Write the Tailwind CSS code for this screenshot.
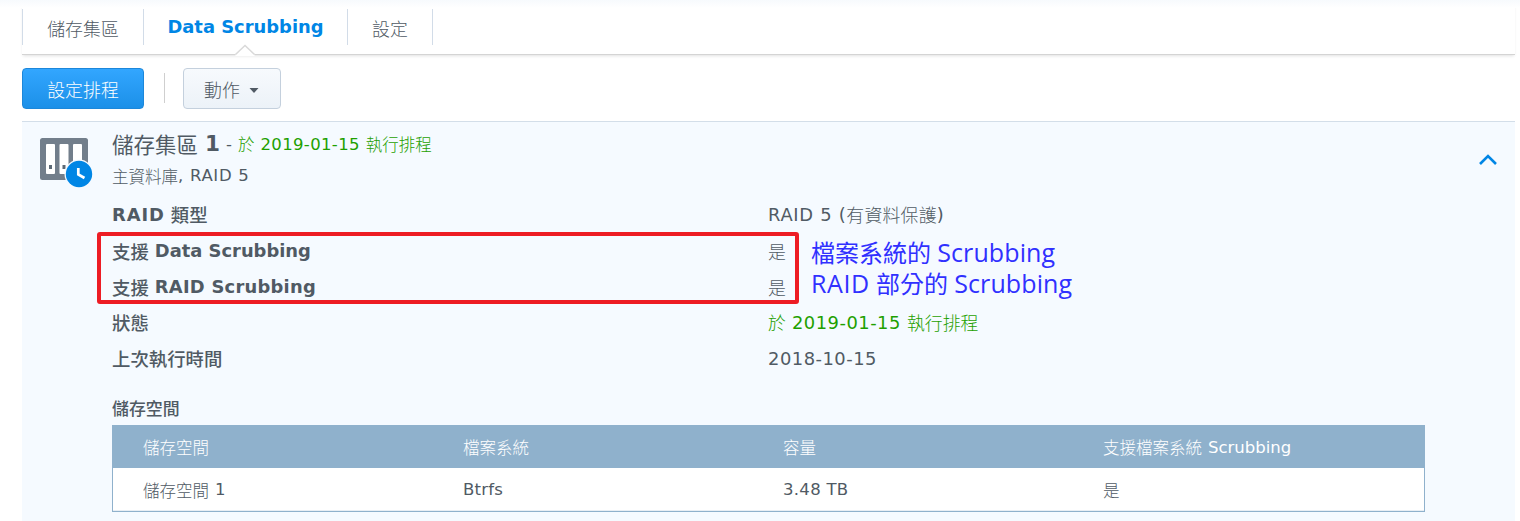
<!DOCTYPE html>
<html lang="zh-Hant">
<head>
<meta charset="utf-8">
<title>Data Scrubbing</title>
<script src="https://cdn.jsdelivr.net/npm/@tailwindcss/browser@4"></script>
</head>
<body class="h-[521px] overflow-hidden bg-white font-['DejaVu_Sans','Noto_Sans_CJK_TC',sans-serif] text-[17.9px] text-[#505a64]">
<div class="flex h-[521px] w-[1515px] flex-col pl-[22px] whitespace-nowrap">

  <!-- Tabs -->
  <nav class="relative h-[55px] shrink-0 border-b border-[#d4d4d4] pt-[9px] shadow-[0_2px_3px_-1px_rgba(0,0,0,0.12)]">
    <div class="flex h-9 border-l border-[#d2dce8] leading-9">
      <a class="flex w-[121px] justify-center border-r border-[#d2dce8] pt-[3px] font-light">儲存集區</a>
      <a class="flex w-[204px] justify-center border-r border-[#d2dce8] font-bold text-[#0086e5]">Data Scrubbing</a>
      <a class="flex w-[85px] justify-center border-r border-[#d2dce8] pt-[3px] font-light">設定</a>
    </div>
    <svg class="absolute top-[44px] left-[212px]" width="22" height="12" viewBox="0 0 22 12"><path d="M1.500 10.500L11 1.500L20.500 10.500V12H1.500Z" fill="#fff"/><path d="M1.500 10.500L11 1.500L20.500 10.500" fill="none" stroke="#d9d9d9" stroke-width="1.500"/></svg>
  </nav>

  <!-- Toolbar -->
  <div class="flex h-[66px] shrink-0 items-start pt-[13px]">
    <button class="flex h-[41px] w-[122px] items-center justify-center rounded border border-[#1c87da] bg-linear-to-b from-[#32a6ff] to-[#1b90e8] font-light text-white"><span class="pt-[5px]">設定排程</span></button>
    <i class="mt-[5px] ml-[20px] h-[30px] w-px bg-[#cfcfcf]"></i>
    <button class="ml-[18px] flex h-[41px] w-[98px] items-center rounded border border-[#c4d0dd] bg-linear-to-b from-[#f7fafd] to-[#ecf2f8] pl-[20px] font-light"><span class="pt-[5px]">動作</span>
      <svg class="mt-[4px] ml-[9px]" width="10" height="5" viewBox="0 0 10 5"><path d="M0.500 0H9.500L5 5Z" fill="#505a64"/></svg>
    </button>
  </div>

  <!-- Storage pool -->
  <main class="relative h-[400px] shrink-0 border-t border-[#d3dee9] bg-[#f5faff]">
    <header class="flex h-[76px] pl-[17px]">
      <svg class="mt-[15px] shrink-0" width="56" height="52" viewBox="0 0 56 52">
        <rect x="1" y="1" width="48" height="42" rx="2.500" fill="#727e8b"/>
        <rect x="7" y="7" width="9" height="30" rx="1" fill="#fff"/>
        <rect x="20.500" y="7" width="9" height="30" rx="1" fill="#fff"/>
        <rect x="34" y="7" width="9" height="30" rx="1" fill="#fff"/>
        <rect x="10" y="28" width="3" height="4" fill="#5d6975"/>
        <rect x="23.500" y="28" width="3" height="4" fill="#5d6975"/>
        <circle cx="40" cy="37" r="14.500" fill="#f5faff"/>
        <circle cx="40" cy="37" r="13.200" fill="#0086e5"/>
        <path d="M39.300 31V37.500L45.500 41" fill="none" stroke="#fff" stroke-width="2.700"/>
      </svg>
      <div class="ml-[17px] flex flex-col pt-[4px]">
        <div class="flex h-[34px] items-start text-[16.5px] leading-[37px]"><span class="pt-px text-[21.5px]">儲存集區</span><b class="ml-[7px] text-[21.5px] leading-[35px]">1</b><span class="ml-[6px]">-</span><span class="ml-[6px] flex gap-[6px] text-[#1ea000]"><span class="pt-px font-light">於</span><span class="tracking-[0.35px]">2019-01-15</span><span class="pt-px font-light">執行排程</span></span></div>
        <div class="flex h-[30px] items-start text-[16.5px] leading-[31px]"><span class="pt-[2px] font-light">主資料庫</span><span class="tracking-[0.7px]">, RAID 5</span></div>
      </div>
      <svg class="mt-[31px] mr-[18px] ml-auto" width="18" height="13" viewBox="0 0 18 13"><path d="M1 11L9 3L17 11" fill="none" stroke="#0086e5" stroke-width="2.600"/></svg>
    </header>

    <dl class="grid auto-rows-[36px] grid-cols-[656px_1fr] pl-[90px] leading-[34px] *:flex *:items-start">
      <dt class="gap-[6px]"><b class="tracking-[0.9px]">RAID</b><span class="pt-px text-[18.4px] font-medium">類型</span></dt><dd class="tracking-[0.7px]"><span>RAID 5 (</span><span class="pt-px font-light tracking-[0.2px]">有資料保護</span><span>)</span></dd>
      <dt class="gap-[6px]"><span class="pt-[2px] text-[18.4px] font-medium">支援</span><b>Data Scrubbing</b></dt><dd class="pt-[2px] font-light">是</dd>
      <dt class="gap-[6px]"><span class="pt-[2px] text-[18.4px] font-medium">支援</span><b class="tracking-[0.25px]">RAID Scrubbing</b></dt><dd class="pt-[2px] font-light">是</dd>
      <dt class="pt-px text-[18.4px] font-medium">狀態</dt><dd class="gap-[6px] text-[#1ea000]"><span class="pt-px font-light">於</span><span class="tracking-[0.5px]">2019-01-15</span><span class="pt-px font-light">執行排程</span></dd>
      <dt class="pt-px text-[18.4px] font-medium">上次執行時間</dt><dd class="tracking-[0.5px]">2018-10-15</dd>
    </dl>

    <section class="pt-[15px] pr-[90px] pl-[90px] text-[16.5px]">
      <h3 class="h-[32px] text-[16.9px] leading-[32px] font-medium">儲存空間</h3>
      <div class="h-[87px] border border-[#8fb1cc] bg-white">
        <div class="grid h-[42px] grid-cols-[320px_320px_320px_1fr] bg-[#8fb1cc] pt-[2px] pl-[30px] leading-[42px] font-light text-white"><span>儲存空間</span><span>檔案系統</span><span>容量</span><span class="-mt-px flex items-start gap-[6px]"><span class="pt-px">支援檔案系統</span><span class="font-normal">Scrubbing</span></span></div>
        <div class="grid h-[43px] grid-cols-[320px_320px_320px_1fr] border-b border-[#e8eef4] pl-[30px] leading-[43px] *:flex *:items-start"><span class="gap-[6px]"><span class="pt-[2px] font-light">儲存空間</span><span>1</span></span><span class="tracking-[0.2px]">Btrfs</span><span class="tracking-[0.3px]">3.48 TB</span><span class="pt-[2px] font-light">是</span></div>
      </div>
    </section>

    <!-- Annotations laid over the panel -->
    <div class="absolute top-[110px] left-[75px] h-[72px] w-[702px] rounded-[3px] border-4 border-[#ed1c24]"></div>
    <div class="absolute top-[115px] left-[789px] font-['Open_Sans','Noto_Sans_CJK_TC',sans-serif] text-[24px] leading-[31px] text-[#3030ff]"><p>檔案系統的 <span class="text-[25px] tracking-[0.1px]">Scrubbing</span></p><p><span class="text-[25px] tracking-[0.6px]">RAID</span> 部分的 <span class="text-[25px] tracking-[0.1px]">Scrubbing</span></p></div>
  </main>
</div>
<div class="absolute inset-x-0 top-0 h-[8px] bg-linear-to-b from-[#f7fafd] to-white"></div>
</body>
</html>
